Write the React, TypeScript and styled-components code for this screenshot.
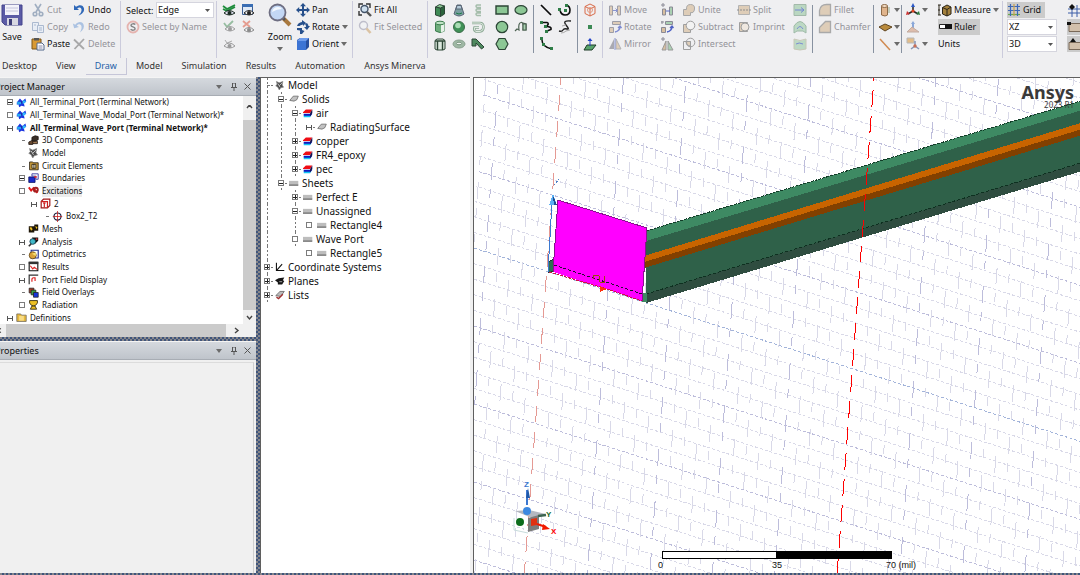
import React from "react";
import styled, { createGlobalStyle, css } from "styled-components";

const GlobalStyle = createGlobalStyle`
  * { box-sizing: border-box; }
  body { margin: 0; background: #f0f0f0; }
  body, button, select, input {
    font-family: "Noto Sans", "Open Sans", sans-serif;
    font-size: 10px;
    color: #111;
  }
  button { border: 0; padding: 0; background: none; }
  ul { list-style: none; margin: 0; padding: 0; }
`;

const hatch = css`
  background: repeating-conic-gradient(#3f557c 0 25%, #86868a 0 50%) 0 0 / 4px 4px;
`;

/* ---------- page ---------- */
const Page = styled.div`
  display: flex;
  flex-direction: column;
  height: 100vh;
  overflow: hidden;
  background: #f0f0f0;
`;
const Workspace = styled.main`
  display: flex;
  flex: 1;
  min-height: 0;
`;
const BottomEdge = styled.div`
  height: 2px;
  ${hatch}
`;

/* ---------- ribbon ---------- */
const Ribbon = styled.header`
  flex: none;
  height: 77px;
  overflow: hidden;
  background: #efeff1;
  font-size: 9px;
  button, select { font-size: 9px; }
`;
const Tools = styled.div`
  display: flex;
  height: 58px;
`;
const Column = styled.div<{ $w: number; $p?: number }>`
  display: flex;
  flex: none;
  flex-direction: column;
  align-items: flex-start;
  gap: 1px;
  width: ${(p) => p.$w}px;
  padding: 2px 0 0 ${(p) => p.$p ?? 0}px;
`;
const IconGrid = styled.div<{ $cols: number }>`
  display: grid;
  flex: none;
  grid-template-columns: repeat(${(p) => p.$cols}, 14px);
  grid-auto-rows: 16px;
  gap: 1px 5px;
  padding-top: 2px;
  margin: 0 5px;
`;
const Divider = styled.div<{ $dark?: boolean }>`
  flex: none;
  width: 1px;
  height: ${(p) => (p.$dark ? "48px" : "57px")};
  margin-top: ${(p) => (p.$dark ? "5px" : "1px")};
  background: ${(p) => (p.$dark ? "#8791a0" : "#cbcbdc")};
`;
const ToolButton = styled.button<{ $off?: boolean; $pressed?: boolean }>`
  display: flex;
  flex: none;
  align-items: center;
  gap: 2px;
  height: 16px;
  padding-right: ${(p) => (p.$pressed ? "4px" : "0")};
  white-space: nowrap;
  line-height: 16px;
  color: ${(p) => (p.$off ? "#94949a" : "#111")};
  background: ${(p) => (p.$pressed ? "#cbcbcb" : "transparent")};
  svg { flex: none; opacity: ${(p) => (p.$off ? 0.7 : 1)}; }
`;
const BigButton = styled.button`
  display: flex;
  flex-direction: column;
  align-items: center;
  gap: 3px;
  width: 24px;
  padding-top: 1px;
  line-height: 14px;
  svg { flex: none; }
`;
const Field = styled.div`
  display: flex;
  align-items: center;
  justify-content: space-between;
  width: 88px;
  height: 16px;
`;
const SelectBox = styled.span<{ $w: number }>`
  display: grid;
  align-items: center;
  width: ${(p) => p.$w}px;
  height: 16px;
  background: #fff;
  border: 1px solid #d5d5de;
  > * { grid-area: 1 / 1; }
  > svg { justify-self: end; margin-right: 3px; pointer-events: none; }
  select {
    appearance: none;
    width: 100%;
    height: 14px;
    padding: 0 0 0 1px;
    border: 0;
    line-height: 14px;
    background: transparent;
  }
`;
const Tabs = styled.nav`
  display: flex;
  height: 17px;
  margin-left: -7px;
`;
const Tab = styled.a<{ $active?: boolean }>`
  flex: none;
  height: 17px;
  padding: 0 9px;
  line-height: 16px;
  text-decoration: none;
  color: ${(p) => (p.$active ? "#1f5fa8" : "#333")};
  border: solid ${(p) => (p.$active ? "#c6c6d8" : "transparent")};
  border-width: 0 1px 1px 0;
`;

/* ---------- docked panels ---------- */
const Dock = styled.aside`
  display: flex;
  flex: none;
  flex-direction: column;
  width: 256px;
`;
const PanelHeader = styled.div`
  display: flex;
  flex: none;
  align-items: center;
  height: 19px;
  padding-right: 2px;
  border-top: 1px solid #f4f4f4;
  border-bottom: 1px solid #a8adb4;
  background: linear-gradient(#d5d9de, #bfc4cb);
`;
const PanelTitle = styled.h2`
  flex: 1;
  margin: 0 0 0 -5px;
  font-size: 9px;
  font-weight: 400;
  line-height: 14px;
`;
const HeaderButton = styled.button`
  display: flex;
  justify-content: center;
  width: 14px;
`;
const TreeScroll = styled.div`
  display: grid;
  flex: none;
  grid-template-columns: 1fr 13px;
  grid-template-rows: 228px 13px;
  background: #fff;
`;
const ProjectTree = styled.ul`
  display: grid;
  grid-auto-rows: 1fr;
  overflow: hidden;
`;
const ProjectRow = styled.li<{ $level: number; $bold?: boolean; $selected?: boolean }>`
  display: flex;
  align-items: center;
  gap: 3px;
  min-height: 0;
  padding-left: ${(p) => 7 + 12 * p.$level}px;
  font-size: 8px;
  line-height: 12px;
  white-space: nowrap;
  font-weight: ${(p) => (p.$bold ? 700 : 400)};
  span { background: ${(p) => (p.$selected ? "#ececec" : "none")}; }
  svg { flex: none; }
`;
const VBar = styled.div`
  display: flex;
  flex-direction: column;
  align-items: center;
  background: #cbcbcb;
`;
const HBar = styled.div`
  display: flex;
  grid-column: 1 / -1;
  background: #cbcbcb;
`;
const ArrowButton = styled.button<{ $w: number; $h: number }>`
  display: flex;
  flex: none;
  align-items: center;
  justify-content: center;
  width: ${(p) => p.$w}px;
  height: ${(p) => p.$h}px;
  background: #f0f0f0;
`;
const Spacer = styled.div`
  flex: 1;
`;
const HSplit = styled.div`
  flex: none;
  height: 4px;
  ${hatch}
`;
const VSplit = styled.div`
  flex: none;
  width: 4px;
  ${hatch}
`;
const PropertiesBody = styled.div`
  flex: 1;
  margin: 2px 2px 0 0;
  border-top: 1px solid #dcdcdc;
  border-right: 1px solid #cfcfcf;
`;

/* ---------- model tree ---------- */
const ModelPanel = styled.section`
  flex: none;
  width: 210px;
  border: solid #5f5f5f;
  border-width: 1px 0 0 1px;
  background: #fff;
`;
const ModelRow = styled.li`
  display: flex;
  align-items: center;
  height: 14px;
  padding-left: 3px;
  line-height: 14px;
  white-space: nowrap;
  svg { flex: none; }
  span { padding-left: 3px; }
`;

/* ---------- 3D view ---------- */
const Viewport = styled.section`
  position: relative;
  flex: 1;
  min-width: 0;
  margin-left: 3px;
  overflow: hidden;
  border: solid #5f5f5f;
  border-width: 1px 0 0 1px;
  background: #fff;
`;
const Scene = styled.svg`
  position: absolute;
  inset: 0;
  width: 100%;
  height: 100%;
`;
const Brand = styled.div`
  position: absolute;
  top: 5px;
  right: 6px;
  text-align: right;
  color: #3a3a3a;
  strong { display: block; font-size: 18px; line-height: 18px; }
  small { display: block; font-size: 8px; line-height: 8px; }
`;
const ScaleOverlay = styled.div`
  position: absolute;
  right: 0;
  bottom: 2px;
  left: 0;
  display: flex;
  justify-content: center;
`;
const Scale = styled.div`
  display: grid;
  grid-template-columns: repeat(2, 115px);
`;
const ScaleHalf = styled.div<{ $fill: string }>`
  height: 8px;
  border: 1px solid #000;
  background: ${(p) => p.$fill};
`;
const ScaleLabels = styled.div`
  display: grid;
  grid-column: 1 / -1;
  grid-template-columns: 114px 114px auto;
  margin: 0 -28px 0 -4px;
  font-family: "Liberation Sans", sans-serif;
  font-size: 9px;
  line-height: 12px;
`;

/* ---------- icons ---------- */
const OUT = "#2c4636";
const GRN = "#8cc795";
const TAN = "#d8bfa0";

const art: Record<string, React.ReactNode> = {
  cut: <g fill="none" stroke="#7f93ad" strokeWidth="1.6"><path d="M4 1l5 8M10 1L5 9" /><circle cx="4" cy="11" r="1.8" /><circle cx="10" cy="11" r="1.8" /></g>,
  copy: <g fill="#e6edf7" stroke="#8fa3c2"><path d="M1.500 2.500h6v8h-6z" /><path d="M6.500 5.500h6v7h-6z" /><path d="M8 8h3M8 10h3M3 5h2" /></g>,
  paste: <g><path d="M1 2h9v10H1z" fill="#d99a34" stroke="#7a5518" /><path d="M3 1h5v2.500H3z" fill="#555" /><path d="M6 6h5l2 2v5H6z" fill="#fff" stroke="#53688c" /><path d="M7.500 9h4M7.500 11h4" stroke="#88a" /></g>,
  undo: <path d="M2 2v5h5L5.200 5.200C8 3.300 10 5 9.500 7.500 9.200 9.500 8 11 6.500 12.500c4-1.500 6-4 5.500-7C11.400 2 7.500 1 4 3.800z" fill="#2f68b8" />,
  redo: <path d="M2 2v5h5L5.200 5.200C8 3.300 10 5 9.500 7.500 9.200 9.500 8 11 6.500 12.500c4-1.500 6-4 5.500-7C11.400 2 7.500 1 4 3.800z" fill="#8fb0dc" transform="rotate(-15 7 7)" />,
  del: <path d="M2 2.500l10 9.500M12 2L2.500 12" stroke="#8a8a8a" strokeWidth="1.800" />,
  byName: <g fill="none"><circle cx="7" cy="7" r="5.500" stroke="#e29a94" strokeWidth="1.800" /><path d="M9.300 4.600C8 3.300 4.900 3.700 5 5.400c.1 1.700 4.100 1.300 4.100 3.300 0 1.700-3 2-4.500.6" stroke="#555" strokeWidth="1.400" /></g>,
  eyeAll: <g fill="none"><path d="M1 3l4 3 8-4M1 6l4 2 8-4" stroke="#1e8c3c" strokeWidth="1.800" /><path d="M2 10q5-5 11 0-6 4-11 0z" stroke="#1b2b22" fill="#dde" /><circle cx="7.500" cy="10" r="2" fill="#1b2b22" /></g>,
  eyeWin: <g><path d="M1.500 1.500h10v10h-10z" fill="#dfe9f6" stroke="#3c5f93" /><path d="M1 1h11v3H1z" fill="#3a6db3" /><path d="M3 10q5-5 10 0-5 4-10 0z" fill="#eee" stroke="#222" /><circle cx="8" cy="10" r="2" fill="#222" /></g>,
  eyeOn: <g fill="none" opacity=".6"><path d="M2 3l3 4 6-6" stroke="#5c9c6c" strokeWidth="1.800" /><path d="M3 9q5-5 10 0-5 4-10 0z" stroke="#666" /><circle cx="8" cy="9" r="2" fill="#666" /></g>,
  eyeOff: <g fill="none" opacity=".65"><path d="M2 1l7 6M9 1L2 7" stroke="#e0705c" strokeWidth="1.800" /><path d="M3 10q5-5 10 0-5 4-10 0z" stroke="#555" /><circle cx="8" cy="10" r="2" fill="#555" /></g>,
  eye: <g fill="none" opacity=".55"><path d="M3 3l2 3 5-2" stroke="#777" /><path d="M2 9q5-6 11 0-5 4-11 0z" stroke="#555" /><circle cx="7.500" cy="9" r="2" fill="#555" /></g>,
  pan: <path d="M7 0l3 3.200H8V6h2.800V4L14 7l-3.200 3V8H8v2.800h2L7 14l-3-3.200h2V8H3.200v2L0 7l3.200-3v2H6V3.200H4z" fill="#27508c" />,
  rotate: <path d="M6 0l4 3-3 3V4.500Q4 5 3.500 6H1Q2 2.500 6 2zM14 6l-3 4-3-3h2q0-2-1-3l2-1q1.500 2 1.500 3zM1 8h5v2l2.500 1L6 14H4V10.500L1 10z" fill="#27508c" />,
  orient: <g><path d="M1 3l3-2h9v9l-3 3H1z" fill="#274f9e" /><path d="M1 4h9v9H1z" fill="#3c74d4" /><path d="M1 4l3-3h9l-3 3z" fill="#6d9cec" /></g>,
  fitAll: <g fill="none"><path d="M1 5V1h4M8 1h4v4M1 8v4h3" stroke="#333" strokeWidth="1.400" /><circle cx="6.500" cy="6" r="3.500" fill="#cfe0ef" stroke="#44546a" strokeWidth="1.400" /><path d="M9 9l4 4" stroke="#555" strokeWidth="2.400" /></g>,
  fitSel: <g fill="none"><circle cx="5.500" cy="5.500" r="4" fill="#f2f4f6" stroke="#aab" strokeWidth="1.400" /><path d="M8.500 8.500L12.500 13" stroke="#d3b183" strokeWidth="2.600" /></g>,
  box: <g stroke={OUT}><path d="M2.500 4v8l5 1.500V5z" fill="#3f8a55" /><path d="M7.500 5v8.500l4-2.500V3z" fill="#2b633c" /><path d="M2.500 4l4-2.500L11.500 3l-4 2z" fill={GRN} /></g>,
  frustum: <g stroke="#5a6676"><path d="M5 2h4l3 9q-5 4-10 0z" fill="#7a9ea0" /><path d="M5 2.500h4l1 3.500H4z" fill="#b5cbd8" /><path d="M4 10q3 2 6 0" stroke="#1d7a46" fill="none" /></g>,
  helix: <g fill="none" stroke="#a5bdab" strokeWidth="1.500"><path d="M10 2H6Q4 3 6 4.500h4M10 6H6Q4 7 6 8.500h4M10 10H6Q4 11 6 12.500h4" /></g>,
  cyl: <g stroke="#3d7d50"><path d="M2.500 3v8q4.500 3 9 0V3z" fill="#6fae7d" /><path d="M8 4.500v8l3.500-1.500V3z" fill="#e6f2e8" stroke="none" /><ellipse cx="7" cy="3" rx="4.500" ry="1.800" fill="#bfe3c5" /></g>,
  sphere: <g><circle cx="7" cy="7" r="5.500" fill="#3f9157" stroke="#3c6b4a" /><circle cx="6" cy="5.500" r="2.800" fill="#a9dcb4" /></g>,
  spiral: <g fill="none" stroke="#8fab97"><path d="M1 3h8q3.500 0 3.500 4T9 11.500H5Q2.500 10.500 3.500 7.500H8" strokeWidth="2.600" /><path d="M1 3h8q3.500 0 3.500 4T9 11.500H5Q2.500 10.500 3.500 7.500H8" stroke="#dfeae1" /></g>,
  prism: <g stroke={OUT}><path d="M2 3.500L4 2h6l2 1.500V12l-2 1H4l-2-1z" fill="#dbe8de" /><path d="M2 4h10M4.500 4v9M9.500 4v9" strokeWidth="1.400" /></g>,
  torus: <g><ellipse cx="7" cy="7" rx="6" ry="4" fill="#9fb8a5" stroke="#8aa08f" /><ellipse cx="7" cy="6.500" rx="2.600" ry="1.300" fill="#eef3ef" stroke="#7a9580" /></g>,
  bond: <path d="M1 9V2h4l8 8-2.500 2L5 6v3z" fill="#4f8a60" stroke={OUT} />,
  rect: <path d="M1 3h12v8H1z" fill={GRN} stroke={OUT} strokeWidth="1.400" />,
  ellipse: <ellipse cx="7" cy="7" rx="6" ry="4.300" fill={GRN} stroke={OUT} strokeWidth="1.200" />,
  circle: <circle cx="7" cy="7" r="5.700" fill={GRN} stroke={OUT} strokeWidth="1.200" />,
  surf: <g fill="none" stroke="#4c6252" strokeWidth="1.200"><path d="M1 11l2-2 2 1Q4 3 7 2.500T9 10h3V4L9 3" /><path d="M9 4h3v6H9z" fill="#a9d3b1" /></g>,
  poly: <path d="M4 1.500h6L13 7l-3 5.500H4L1 7z" fill={GRN} stroke={OUT} strokeWidth="1.200" />,
  line: <path d="M2 2l10 10" stroke="#0c0c0c" strokeWidth="1.700" />,
  arc: <g><path d="M2 7q1 5 5 5 5 0 5-5 0-4-4-5" fill="none" stroke="#0c0c0c" strokeWidth="1.600" /><path d="M0 5h3v3H0zM6 6h3v3H6zM7 1h3v3H7z" fill="#2f7d47" /></g>,
  spline: <g><path d="M3 2.500h5q3 1-1 4 6 0 5 3l-4 1.500" fill="none" stroke="#0c0c0c" strokeWidth="1.600" /><path d="M1 1h3v3H1zM5 5h3v3H5zM6 10h3v3H6z" fill="#2f7d47" /></g>,
  eqCurve: <g fill="none"><path d="M1 11q3 1 4-1t4-1-1-4 5-4" stroke="#222" strokeWidth="1.400" /><path d="M3 13q3 0 5-2l4-1M4 6l4-1" stroke="#aaa" /></g>,
  arc3: <g><path d="M3 3q0 7 10 9" fill="none" stroke="#0c0c0c" strokeWidth="1.500" /><path d="M1 0h3v3H1zM3 6h3v3H3zM11 10h3v3h-3z" fill="#2f7d47" /></g>,
  cage: <g fill="none" stroke="#d86a48"><path d="M2 3.500L7 1l5 2.500v7L7 13l-5-2.500zM2 3.500L7 6l5-2.500M7 6v7" /><circle cx="7" cy="7" r="2.500" stroke="#e59a80" /></g>,
  point: <path d="M5 5h4v4H5z" fill="#3c8a55" />,
  plane: <g><path d="M4 8h9l-4 5H1z" fill="#58a46c" stroke="#1e3c28" /><path d="M7 1l2.500 3h-2v5h-1V4h-2z" fill="#2343c8" /></g>,
  move: <g stroke="#7c7c88"><path d="M1.500 3v9h3V3zM9.500 3v9h3V3z" fill={TAN} /><path d="M5 7.500h4M7.500 5.500l2 2-2 2" stroke="#5f6ec4" fill="none" /></g>,
  rot2: <g stroke="#7c7c88"><path d="M4.500 1.500h8v3h-8z" fill={TAN} /><path d="M1.500 7.500h4v5h-4z" fill={TAN} /><path d="M7 12q5-1 5-6M10 8l2-2 1.500 2" stroke="#4f62c4" strokeWidth="1.400" fill="none" /></g>,
  mirror: <g><path d="M6 2v10H1z" fill="#8c8c96" /><path d="M8 2v10h5z" fill={TAN} stroke="#999" /><path d="M7 1v12" stroke="#5f6ec4" /></g>,
  dupLine: <g stroke="#8a8a96"><path d="M1 2h4M3 0v4" /><path d="M2.500 6v6h3V6z" fill={TAN} /><path d="M9.500 4v8h3V4z" fill="#a9d0b2" /><path d="M6 8h4" stroke="#5f6ec4" /></g>,
  dupAxis: <g stroke="#8a8a96"><path d="M1 2h3M2 1v3" /><path d="M5.500 1.500h7v3h-7z" fill="#a9d0b2" /><path d="M1.500 7.500h4v5h-4z" fill={TAN} /><path d="M7 12q5-1 5-6M10 8l2-2 1.500 2" stroke="#4f62c4" strokeWidth="1.400" fill="none" /></g>,
  dupMirror: <g><path d="M1 2h4M3 0v4" stroke="#8a8a96" /><path d="M6 4v9H2z" fill={TAN} stroke="#999" /><path d="M8 4v9h5z" fill="#a9d0b2" stroke="#999" /></g>,
  unite: <path d="M1.500 12.500v-6h3Q4 1.500 8.500 1.500t4 4.500-4 3.500v3z" fill={TAN} stroke="#8a8a8a" />,
  subtract: <g stroke="#7c7c7c"><path d="M1.500 4.500h7v8h-7z" fill={TAN} /><circle cx="8.500" cy="5.500" r="4.300" fill="#f5f5f5" /></g>,
  intersect: <g stroke="#7c7c7c" fill="none"><path d="M1.500 4.500h7v8h-7z" /><path d="M4.500 4.500h4v4.500q-4 0-4-4.500z" fill={TAN} /><circle cx="8.500" cy="5.500" r="4.300" /></g>,
  split: <g><path d="M1.500 2.500h11v9h-11z" fill={TAN} stroke="#9a9a9a" /><path d="M0 7h14" stroke="#666" strokeDasharray="2 1" /></g>,
  imprint: <g stroke="#7c7c7c"><path d="M2.500 2.500h8v9h-8z" fill={TAN} /><circle cx="8" cy="7" r="4" fill="#efe6da" /></g>,
  sweep: <g opacity=".75"><path d="M1 1.500h12v11H1z" fill="#a9d0b2" stroke="#8aa893" /><path d="M2 7h9M8 4.500L11 7 8 9.500" fill="none" stroke="#4a63c8" /></g>,
  wrap: <g opacity=".7" fill="none" stroke="#7fa58a"><path d="M1 13V6q6-9 12 0v7l-3-2H4z" fill="#a9d0b2" /><path d="M4 9q3-5 6 0" stroke="#4a63c8" /></g>,
  wave: <g opacity=".7"><path d="M1 2q6 3 12 0v10q-6 2-12 0z" fill="#a9d0b2" stroke="#b8b8a0" /><path d="M3 7q3-2 7 0" fill="none" stroke="#4a63c8" /></g>,
  fillet: <path d="M1.500 12.500v-5q1-6 7-6h4v11z" fill={TAN} stroke="#8c8c8c" strokeWidth="1.300" />,
  chamfer: <path d="M1.500 12.500v-5l6-6h5v11z" fill={TAN} stroke="#8c8c8c" strokeWidth="1.300" />,
  tube: <g stroke="#8c6a48"><path d="M3.500 3v9q4 2 6 0V3z" fill="#e0b48c" /><ellipse cx="6.500" cy="3" rx="3" ry="1.500" fill="#f3dcc4" /><path d="M11 4v6" stroke="#9a8" /></g>,
  sheet: <path d="M1 7l6-3 7 3-7 4z" fill="#b98a3c" stroke="#5e4420" />,
  edge: <path d="M2 2l10 11" stroke="#d08a50" strokeWidth="1.500" />,
  axes: <g><path d="M7 8V2M7 8l-5 3M7 8l5 3" stroke="#222" strokeWidth="1.500" /><path d="M7 0l2 4H5z" fill="#2a58c8" /><path d="M0 12l1-4 3 3z" fill="#c33" /><path d="M14 12l-1-4-3 3z" fill="#287a3c" /><circle cx="7" cy="8" r="1.600" fill="#d42" /></g>,
  axesSoft: <g opacity=".7"><path d="M7 1l2 3H8v5H6V4H5z" fill="#5f8ad0" /><path d="M1 12l5-5 7 5z" fill="#d8a890" stroke="#b09080" /></g>,
  axesFace: <g opacity=".8"><path d="M1 1h7v5H1z" fill="#e0b070" stroke="#aaa" /><path d="M9 9V4M9 9l-4 3M9 9l4 3" stroke="#6a7fa8" strokeWidth="1.500" /><circle cx="9" cy="9" r="1.700" fill="#c05030" /></g>,
  measure: <g stroke="#2a2418"><path d="M1 2v10M0 2h3M0 12h3M0 7h2" /><path d="M4.500 4.500L9 2l4 2v7l-4 2-4.500-2z" fill="#a3803c" /><path d="M4.500 4.500L9 6.500 13 4M9 6.500V13" fill="none" /></g>,
  ruler: <g><path d="M1.500 4.500h12v4h-12z" fill="#fff" stroke="#222" /><path d="M7 4h7v5H7z" fill="#111" /></g>,
  grid: <g strokeWidth="1.200"><path d="M1 3.500h12M1 7.500h12" stroke="#3c68b8" /><path d="M1 11.500h12" stroke="#6aa84c" /><path d="M3.500 1v12M10.500 1v12" stroke="#3c68b8" /><path d="M7 1v12" stroke="#c9a04c" /></g>,
  snapGrid: <g><path d="M1 6h13M1 10h13M5 2v12M10 2v12" stroke="#3c5fa8" /><path d="M5 1l3 3-3 3-3-3z" fill="#111" /></g>,
  snapRect: <g><path d="M2 3.500h12v8H2z" fill="#d2c0ab" stroke="#7a6a5a" /><path d="M0 2h4v3H0z" fill="#111" /></g>,
  snapMid: <g><path d="M2 5.500h12v7H2z" fill="#d2c0ab" stroke="#7a6a5a" /><path d="M6 1l3 4H3z" fill="#111" /></g>,

  project: <g><path d="M1 7l4-5 3 3 4-3 1 4-3 2 1 4-4-1-3 2-1-4-2 1z" fill="#1b35e0" /><path d="M1 6h5l1 3-5 1z" fill="#28a8f0" /><path d="M9 4l4 1-3 4-3-2z" fill="#30b8ff" /><path d="M6 5l3 1-2 3z" fill="#2020a0" /></g>,
  comps: <g stroke="#1c1410"><path d="M1 9l4-2 4 1-3 4H1z" fill="#6a4a30" /><path d="M5 3l4-2 4 1v4l-4 2-4-1z" fill="#3a3028" /><path d="M6 8h6v3H6z" fill="#a07850" /></g>,
  model: <g fill="#4a4a4a" stroke="#8a8a8a"><path d="M2 2l4 2 5-2-1 5 2 3-4 1-2 3-2-4-3-2 2-2z" /><path d="M4 5l3 5M10 4L6 8" stroke="#e4e4e4" /></g>,
  circuit: <g stroke="#20180c"><path d="M2 2.500h4l1 1h6v9H2z" fill="#c79a3a" /><path d="M5 5.500h5v5H5z" fill="#efe6c8" /><path d="M7.500 5v6" /></g>,
  boundary: <g><path d="M1 5h8v7H1z" fill="#1c2cc8" stroke="#0a1060" /><path d="M5 1h8v7h-3V4H5z" fill="#f6f6f6" stroke="#22249a" /><path d="M8 4h3v2H8z" fill="#e22" /></g>,
  excite: <g fill="none" stroke="#e01818" strokeWidth="2.400"><path d="M1 3l3 4 3-3 5 6" /><circle cx="10" cy="6" r="2.500" stroke="#a02020" /></g>,
  port: <g fill="none" stroke="#a01818"><path d="M1.500 4.500l3-3h8v8l-3 3h-8z" fill="#fff" strokeWidth="1.500" /><path d="M1.500 4.500h8v8M5.500 6v6M4 6.500h3" stroke="#d02020" strokeWidth="1.500" /></g>,
  terminal: <g fill="none"><circle cx="7" cy="7" r="4.500" stroke="#1c1c3c" strokeWidth="1.500" /><path d="M7 0v14M1 7h12" stroke="#c82020" /></g>,
  mesh: <g><path d="M1 4h7v8H1zM8 2h5v8H8z" fill="#1e1608" /><path d="M2 6l2-1 2 3-2 2zM9 4l3 1-1 3z" fill="#f0c020" /></g>,
  analysis: <g><path d="M5 2h8v4l-4 4z" fill="#141414" /><circle cx="6" cy="7" r="3.600" fill="#40b8c8" stroke="#134" /><path d="M4 10l-3 3" stroke="#333" strokeWidth="2" /><path d="M10 3h2v2h-2z" fill="#d33" /></g>,
  optim: <g><path d="M4 1.500h9v10H4z" fill="#fff" stroke="#1c2c8c" strokeWidth="1.400" /><circle cx="6" cy="8" r="4.500" fill="#d9a23a" stroke="#5c4010" /><path d="M5 6l5-2v5z" fill="#f6df70" /></g>,
  results: <g><path d="M1.500 1.500h11v11h-11z" fill="#fff" stroke="#111" strokeWidth="1.400" /><path d="M1 1h12v3H1z" fill="#333" /><path d="M3 6l3 4 2-2 4 3" fill="none" stroke="#d22" strokeWidth="1.400" /></g>,
  portField: <g fill="none"><path d="M1.500 13V1.500H13" stroke="#333" strokeWidth="1.500" /><path d="M5 10V7q0-3 4-2v4" stroke="#d22" strokeWidth="1.500" /></g>,
  overlays: <g stroke="#222"><path d="M1.500 1.500h6v6h-6z" fill="#b03820" /><path d="M4 4h6v6H4z" fill="#3aa040" /><path d="M7 7h6v6H7z" fill="#1634d8" /></g>,
  radiation: <g stroke="#1e1804" fill="#ecc024"><path d="M2 2h10v3q-2 4-5 4T2 5z" /><path d="M5 9h4l2 4H3z" /></g>,
  folder: <g><path d="M1 2.500h5l1 1.500h6v8H1z" fill="#e8b93c" stroke="#6f6a60" /><path d="M4 5h6v6H4z" fill="#f8dc84" /></g>,
  solid: <path d="M1 9l5-6h7l-2 5-4 2z" fill="#c2c2c2" stroke="#5c5c5c" />,
  material: <g><path d="M1 11l2-2h9l-2 4H1z" fill="#12c4f4" /><path d="M1 8h12l-2 3H1z" fill="#1018c0" /><path d="M0 6l4-4h9l-3 5H0z" fill="#f00c14" /><path d="M13 2v5l-3 5V7z" fill="#10104c" /></g>,
  sheets: <g><path d="M0 4h13v6H0z" fill="#bdbdbd" /><path d="M0 10h13" stroke="#4e4e4e" strokeWidth="1.400" /></g>,
  cs: <path d="M2 1v11h11M2 12l8-9" fill="none" stroke="#111" strokeWidth="1.500" />,
  planes: <g fill="#161616"><path d="M0 6l5-3 8-1-2 4 2 1-3 5H4V9z" /><path d="M6 8h4" stroke="#ddd" /></g>,
  lists: <g stroke="#555"><path d="M1 8l6-6h6l-5 7z" fill="#bbb" /><path d="M2 10l3 2 6-6" fill="none" stroke="#a03030" strokeWidth="1.800" /></g>,
};

const Icon = ({ name, size = 14 }: { name: string; size?: number }) => (
  <svg width={size} height={size} viewBox="0 0 14 14" aria-hidden="true">{art[name]}</svg>
);
const Caret = () => (
  <svg width="6" height="4" viewBox="0 0 6 4" aria-hidden="true"><path d="M0 0h6L3 4z" fill="#6b6b6b" /></svg>
);
const SmallCaret = () => (
  <svg width="5" height="3" viewBox="0 0 5 3" aria-hidden="true"><path d="M0 0h5L2.500 3z" fill="#555" /></svg>
);
const SaveArt = () => (
  <svg width="22" height="24" viewBox="0 0 22 24" aria-hidden="true">
    <path d="M1 2h20v20H4l-3-3z" fill="#5b5ba6" stroke="#45458c" />
    <path d="M4 2h14v10H4z" fill="#f3f3fa" /><path d="M5 5h12M5 8h12" stroke="#c4c4dc" />
    <path d="M6 15h11v7H6z" fill="#d8d8e2" /><path d="M8 16h3v6H8z" fill="#3d3d78" />
  </svg>
);
const ZoomArt = () => (
  <svg width="24" height="24" viewBox="0 0 24 24" aria-hidden="true">
    <path d="M15 15l7 7" stroke="#a9793e" strokeWidth="4" /><path d="M14 14l3 3" stroke="#555" strokeWidth="2.500" />
    <circle cx="9.500" cy="9.500" r="8" fill="#c3d7f4" stroke="#6e6e82" strokeWidth="1.800" />
    <path d="M4 9q1-5 6-5 3 0 4 2-5 0-10 3z" fill="#f4f9ff" />
  </svg>
);

type Item = { icon?: string; text?: string; off?: boolean; pressed?: boolean; caret?: boolean };
const Tool = ({ icon, text, off, pressed, caret }: Item) => (
  <ToolButton $off={off} $pressed={pressed} disabled={off} aria-pressed={pressed} aria-label={text ?? icon}>
    {icon && <Icon name={icon} />}
    {text}
    {caret && <Caret />}
  </ToolButton>
);
const ToolColumn = ({ w, p, items }: { w: number; p?: number; items: Item[] }) => (
  <Column $w={w} $p={p}>{items.map((it, i) => <Tool key={i} {...it} />)}</Column>
);
const ToolIcons = ({ cols, names }: { cols: number; names: string[] }) => (
  <IconGrid $cols={cols}>
    {names.map((n, i) => (n ? <Tool key={i} icon={n} /> : <span key={i} />))}
  </IconGrid>
);

const tabs = ["Desktop", "View", "Draw", "Model", "Simulation", "Results", "Automation", "Ansys Minerva"];

/* ---------- tree data ---------- */
type Exp = "" | "box" | "minus" | "plus" | "ends" | "dash";
const Expander = ({ kind }: { kind: Exp }) => (
  <svg width="6" height="6" viewBox="0 0 6 6" shapeRendering="crispEdges" aria-hidden="true">
    {(kind === "box" || kind === "minus" || kind === "plus") && <path d="M.5 .5h5v5h-5z" fill="#fff" stroke="#7c7c7c" />}
    {(kind === "minus" || kind === "plus") && <path d="M1 3.500h4" stroke="#222" />}
    {kind === "plus" && <path d="M3.500 1v4" stroke="#222" />}
    {kind === "ends" && <path d="M.5 1v5M5.500 1v5M0 3.500h6" stroke="#555" />}
    {kind === "dash" && <path d="M3 3.500h3" stroke="#777" />}
  </svg>
);

const projectRows: [number, Exp, string, string][] = [
  [0, "minus", "project", "All_Terminal_Port (Terminal Network)"],
  [0, "box", "project", "All_Terminal_Wave_Modal_Port (Terminal Network)*"],
  [0, "ends", "project", "All_Terminal_Wave_Port (Terminal Network)*"],
  [1, "dash", "comps", "3D Components"],
  [1, "", "model", "Model"],
  [1, "dash", "circuit", "Circuit Elements"],
  [1, "minus", "boundary", "Boundaries"],
  [1, "box", "excite", "Excitations"],
  [2, "ends", "port", "2"],
  [3, "dash", "terminal", "Box2_T2"],
  [1, "", "mesh", "Mesh"],
  [1, "ends", "analysis", "Analysis"],
  [1, "dash", "optim", "Optimetrics"],
  [1, "box", "results", "Results"],
  [1, "ends", "portField", "Port Field Display"],
  [1, "dash", "overlays", "Field Overlays"],
  [1, "box", "radiation", "Radiation"],
  [0, "ends", "folder", "Definitions"],
];

/* The guide string lists the dashed vertical lines left of the icon, one digit per level. */
const modelRows: [string, Exp, string, string][] = [
  ["1", "dash", "model", "Model"],
  ["11", "minus", "solid", "Solids"],
  ["111", "minus", "material", "air"],
  ["1110", "ends", "solid", "RadiatingSurface"],
  ["111", "plus", "material", "copper"],
  ["111", "plus", "material", "FR4_epoxy"],
  ["111", "plus", "material", "pec"],
  ["11", "minus", "sheets", "Sheets"],
  ["101", "plus", "sheets", "Perfect E"],
  ["101", "minus", "sheets", "Unassigned"],
  ["1010", "box", "sheets", "Rectangle4"],
  ["101", "box", "sheets", "Wave Port"],
  ["1000", "box", "sheets", "Rectangle5"],
  ["1", "plus", "cs", "Coordinate Systems"],
  ["1", "plus", "planes", "Planes"],
  ["1", "plus", "lists", "Lists"],
];
const ModelGuides = ({ guides, kind }: { guides: string; kind: Exp }) => {
  const last = guides.length - 1;
  const x = last * 14;
  return (
    <svg width={x + 11} height="14" shapeRendering="crispEdges" aria-hidden="true">
      {guides.split("").map((g, i) =>
        g === "1" ? <path key={i} d={`M${i * 14 + 3}.5 0v14`} stroke="#777" strokeDasharray="2 2" /> : null
      )}
      {kind !== "box" && <path d={`M${x + 7} 7.500h3`} stroke="#777" strokeDasharray="2 1" />}
      <svg x={x} y="4" width="6" height="6"><Expander kind={kind} /></svg>
    </svg>
  );
};

/* ---------- drawing grid ---------- */
const GRID_X = 87; /* where the main axis line crosses the top edge */
const GRID_Y = 170; /* where the main axis line crosses the left edge */
const verticals = Array.from({ length: 140 }, (_, i) => i - 8);
const slants = Array.from({ length: 110 }, (_, i) => i - 60);

const GridLines = () => (
  <g shapeRendering="crispEdges" fill="none">
    {slants.map((k) => {
      const y = GRID_Y + k * 15.6;
      const color = k === 0 ? "#a3b4da" : k % 5 === 0 ? "#bdbddb" : "#d9d9e8";
      return <path key={k} d={`M0 ${y}L2000 ${y + 638}`} stroke={color} strokeDasharray="3 2" />;
    })}
    {verticals.map((k) => {
      const x = GRID_X + k * 12.5;
      if (k === 0 || k === 25) return null;
      const color = k % 5 === 0 ? "#bdbddb" : "#d9d9e8";
      return <path key={k} d={`M${x} 0L${x - 73} 1000`} stroke={color} strokeDasharray="9 17 17 9" strokeDashoffset={(k * 19 + 400) % 52} />;
    })}
    <path d={`M${GRID_X} 0L${GRID_X - 74} 1000`} stroke="#e59a94" strokeDasharray="16 10" strokeDashoffset="9" />
  </g>
);

const ModelScene = () => (
  <Scene role="img" aria-label="Microstrip line with wave port">
    <clipPath id="gridArea"><path d="M10 0H2000V1000H0V140z" /></clipPath>
    <g clipPath="url(#gridArea)"><GridLines /></g>
    <g shapeRendering="crispEdges">
      <path d="M172 153L605 23.500 1605-276V-183L605 94 172 225z" fill="#2f6149" />
      <path d="M172 153L605 23.500 1605-276V-266L605 33 172 163z" fill="#3e8a63" />
      <path d="M170 178L605 45.500 1605-259V-253L605 52 170 184z" fill="#c86400" />
      <path d="M170 184L605 52 1605-253V-246L605 58 170 190z" fill="#824000" />
      <path d="M172 216L605 85.500 1605-216V-207L605 94 172 225z" fill="#2f4d40" />
      <path d="M172 153L605 23.500 1605-276" fill="none" stroke="#123d28" strokeDasharray="3 1" />
      <path d="M172 216L605 85.500 1605-216" fill="none" stroke="#0e3020" strokeDasharray="3 2" />
      <path d="M74 184l6-3v12l-6 2z" fill="#2f6f52" stroke="#1d3a2e" />
      <path d="M168 215h5v9h-5z" fill="#3e8a63" />
      <path d="M84 122L173 150 168 223 79 194z" fill="#f0f" />
      <path d="M79 194L84 122 173 150 168 223" fill="none" stroke="#8a1090" />
      <path d="M80 187L168 216" stroke="#201030" strokeDasharray="3 2" />
      <path d="M75 194L133 211 168 223" fill="none" stroke="#d01048" strokeDasharray="3 1" />
      <path d="M119 201v-4l6 1 1 6h4v-6" fill="none" stroke="#9a4a10" />
      <path d="M126 208l7 3-7 3z" fill="#ff3010" />
      <path d="M74 194L78 124" stroke="#3c78d0" />
      <path d="M79 116l4 11h-8z" fill="#5cb0f4" /><path d="M79 118l4 9h-3z" fill="#204c90" />
      <path d="M80 107l5-6" stroke="#4c80c8" strokeDasharray="2 1" />
      <path d="M400 0L363 497" stroke="#ff0000" strokeDasharray="17 9" strokeDashoffset="14" />
    </g>
    <g>
      <path d="M41 433l14-1 17 4-14 4z" fill="#b4b8c0" />
      <path d="M40 440v12l14 3" fill="none" stroke="#c8dcdc" />
      <path d="M54 440l11-3v14l-11 3z" fill="#7c7c7c" />
      <path d="M53 427V412" stroke="#3c78d0" strokeWidth="2" /><path d="M54 410l2 10h-4z" fill="#2058a8" />
      <circle cx="53" cy="433" r="4" fill="#3c88e0" />
      <circle cx="46" cy="444" r="4" fill="#0c6c1c" />
      <path d="M57 441l6-1v7l-6 1z" fill="#e03010" />
      <path d="M63 446l9 3" stroke="#f01800" strokeWidth="2" /><path d="M69 446l7 5-8 1z" fill="#f01800" />
      <path d="M64 438l8-1" stroke="#3c6450" strokeWidth="2.500" />
      <g fontFamily="Liberation Sans, sans-serif" fontSize="8" fontWeight="700">
        <text x="50" y="409" fill="#3c78d0">Z</text>
        <text x="72" y="439" fill="#1c6a2c">Y</text>
        <text x="77" y="456" fill="#f00">X</text>
      </g>
    </g>
  </Scene>
);

const Header = ({ title }: { title: string }) => (
  <PanelHeader>
    <PanelTitle>{title}</PanelTitle>
    <HeaderButton aria-label="Panel menu"><Caret /></HeaderButton>
    <HeaderButton aria-label="Pin panel">
      <svg width="7" height="8" viewBox="0 0 7 8"><path d="M2 0h4M2.500 0v4M5.500 0v4M1 4.500h6M4 5v3" stroke="#555" fill="none" /></svg>
    </HeaderButton>
    <HeaderButton aria-label="Close panel">
      <svg width="7" height="7" viewBox="0 0 7 7"><path d="M.5 .5l6 6M6.500 .5l-6 6" stroke="#555" /></svg>
    </HeaderButton>
  </PanelHeader>
);
const Chevron = ({ d }: { d: string }) => (
  <svg width="7" height="7" viewBox="0 0 7 7" aria-hidden="true"><path d={d} fill="none" stroke="#444" strokeWidth="1.400" /></svg>
);

export default function App() {
  return (
    <Page>
      <GlobalStyle />
      <Ribbon>
        <Tools>
          <Column $w={30}><BigButton><SaveArt />Save</BigButton></Column>
          <ToolColumn w={42} p={1} items={[{ icon: "cut", text: "Cut", off: true }, { icon: "copy", text: "Copy", off: true }, { icon: "paste", text: "Paste" }]} />
          <ToolColumn w={48} items={[{ icon: "undo", text: "Undo" }, { icon: "redo", text: "Redo", off: true }, { icon: "del", text: "Delete", off: true }]} />
          <Divider />
          <Column $w={95} $p={5}>
            <Field>
              <label htmlFor="pick">Select:</label>
              <SelectBox $w={58}><select id="pick"><option>Edge</option></select><SmallCaret /></SelectBox>
            </Field>
            <Tool icon="byName" text="Select by Name" off />
          </Column>
          <Divider />
          <ToolIcons cols={2} names={["eyeAll", "eyeWin", "eyeOn", "eyeOff", "eye", ""]} />
          <Column $w={36} $p={8}><BigButton><ZoomArt />Zoom<Caret /></BigButton></Column>
          <ToolColumn w={56} items={[{ icon: "pan", text: "Pan" }, { icon: "rotate", text: "Rotate", caret: true }, { icon: "orient", text: "Orient", caret: true }]} />
          <Divider />
          <ToolColumn w={74} p={5} items={[{ icon: "fitAll", text: "Fit All" }, { icon: "fitSel", text: "Fit Selected", off: true }]} />
          <Divider />
          <ToolIcons cols={3} names={["box", "frustum", "helix", "cyl", "sphere", "spiral", "prism", "torus", "bond"]} />
          <ToolIcons cols={2} names={["rect", "ellipse", "circle", "surf", "poly", ""]} />
          <Divider $dark />
          <ToolIcons cols={2} names={["line", "arc", "spline", "eqCurve", "arc3", ""]} />
          <Divider $dark />
          <ToolIcons cols={1} names={["cage", "point", "plane"]} />
          <Divider />
          <ToolColumn w={52} p={5} items={[{ icon: "move", text: "Move", off: true }, { icon: "rot2", text: "Rotate", off: true }, { icon: "mirror", text: "Mirror", off: true }]} />
          <ToolIcons cols={1} names={["dupLine", "dupAxis", "dupMirror"]} />
          <ToolColumn w={57} p={3} items={[{ icon: "unite", text: "Unite", off: true }, { icon: "subtract", text: "Subtract", off: true }, { icon: "intersect", text: "Intersect", off: true }]} />
          <ToolColumn w={52} p={1} items={[{ icon: "split", text: "Split", off: true }, { icon: "imprint", text: "Imprint", off: true }]} />
          <ToolIcons cols={1} names={["sweep", "wrap", "wave"]} />
          <Divider $dark />
          <ToolColumn w={60} p={5} items={[{ icon: "fillet", text: "Fillet", off: true }, { icon: "chamfer", text: "Chamfer", off: true }]} />
          <Divider $dark />
          <ToolColumn w={27} p={4} items={[{ icon: "tube", caret: true }, { icon: "sheet", caret: true }, { icon: "edge", caret: true }]} />
          <Divider $dark />
          <ToolColumn w={36} p={4} items={[{ icon: "axes", caret: true }, { icon: "axesSoft" }, { icon: "axesFace", caret: true }]} />
          <ToolColumn w={64} items={[{ icon: "measure", text: "Measure", caret: true }, { icon: "ruler", text: "Ruler", pressed: true }, { text: "Units" }]} />
          <Divider />
          <Column $w={61} $p={4}>
            <Tool icon="grid" text="Grid" pressed />
            <SelectBox $w={50}><select aria-label="Drawing plane"><option>XZ</option></select><SmallCaret /></SelectBox>
            <SelectBox $w={50}><select aria-label="Movement mode"><option>3D</option></select><SmallCaret /></SelectBox>
          </Column>
          <ToolColumn w={20} p={3} items={[{ icon: "snapGrid" }, { icon: "snapRect", pressed: true }, { icon: "snapMid", pressed: true }]} />
        </Tools>
        <Tabs>
          {tabs.map((t) => <Tab key={t} href="#" $active={t === "Draw"}>{t}</Tab>)}
        </Tabs>
      </Ribbon>

      <Workspace>
        <Dock>
          <Header title="Project Manager" />
          <TreeScroll>
            <ProjectTree>
              {projectRows.map(([level, exp, icon, label]) => (
                <ProjectRow key={label} $level={level} $bold={label.startsWith("All_Terminal_Wave_Port")} $selected={label === "Excitations"}>
                  <Expander kind={exp} />
                  <Icon name={icon} size={11} />
                  <span>{label}</span>
                </ProjectRow>
              ))}
            </ProjectTree>
            <VBar>
              <ArrowButton $w={13} $h={24} aria-label="Scroll up"><Chevron d="M1 3l2.500-3L6 3" /></ArrowButton>
              <Spacer />
              <ArrowButton $w={13} $h={14} aria-label="Scroll down"><Chevron d="M1 2l2.500 3L6 2" /></ArrowButton>
            </VBar>
            <HBar>
              <ArrowButton $w={6} $h={13} aria-label="Scroll left"><Chevron d="M1 1L-2 3.500 1 6" /></ArrowButton>
              <Spacer />
              <ArrowButton $w={20} $h={13} aria-label="Scroll right"><Chevron d="M2 1l3 2.500L2 6" /></ArrowButton>
              <ArrowButton as="span" $w={10} $h={13} />
            </HBar>
          </TreeScroll>
          <HSplit />
          <Header title="Properties" />
          <PropertiesBody />
        </Dock>
        <VSplit />
        <ModelPanel>
          <ul>
            {modelRows.map(([guides, exp, icon, label]) => (
              <ModelRow key={label}>
                <ModelGuides guides={guides} kind={exp} />
                <Icon name={icon} size={10} />
                <span>{label}</span>
              </ModelRow>
            ))}
          </ul>
        </ModelPanel>
        <Viewport>
          <ModelScene />
          <Brand><strong>Ansys</strong><small>2023 R1</small></Brand>
          <ScaleOverlay>
            <Scale>
              <ScaleHalf $fill="#fff" />
              <ScaleHalf $fill="#000" />
              <ScaleLabels><span>0</span><span>35</span><span>70 (mil)</span></ScaleLabels>
            </Scale>
          </ScaleOverlay>
        </Viewport>
      </Workspace>
      <BottomEdge />
    </Page>
  );
}
